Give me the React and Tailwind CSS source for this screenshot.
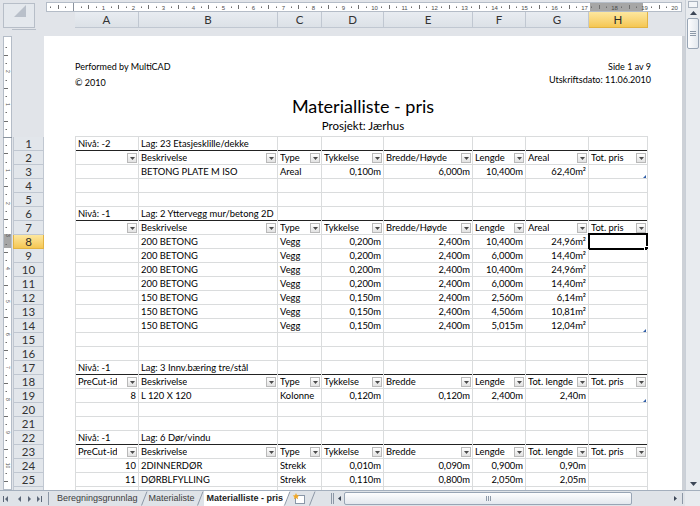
import React from 'react';

const W = [63, 139, 44, 62, 89, 53, 63, 59];
const LETTERS = ['A', 'B', 'C', 'D', 'E', 'F', 'G', 'H'];
const GRID = 'grid grid-cols-[63px_139px_44px_62px_89px_53px_63px_59px]';

const H1 = ['', 'Beskrivelse', 'Type', 'Tykkelse', 'Bredde/Høyde', 'Lengde', 'Areal', 'Tot. pris'];
const H2 = ['PreCut-id', 'Beskrivelse', 'Type', 'Tykkelse', 'Bredde', 'Lengde', 'Tot. lengde', 'Tot. pris'];

const blank = { t: 'blank' };
const vegg = (b, d, f, g) => ({ t: 'data', c: ['', b, 'Vegg', d, '2,400m', f, g, ''] });

const ROWS = [
  { t: 'lvl', c: ['Nivå: -2', 'Lag: 23 Etasjesklille/dekke'] },
  { t: 'head', c: H1 },
  { t: 'data', c: ['', 'BETONG PLATE M ISO', 'Areal', '0,100m', '6,000m', '10,400m', '62,40m²', ''], mark: true },
  blank,
  blank,
  { t: 'lvl', c: ['Nivå: -1', 'Lag: 2 Yttervegg mur/betong 2D'] },
  { t: 'head', c: H1 },
  { ...vegg('200 BETONG', '0,200m', '10,400m', '24,96m²'), sel: true },
  vegg('200 BETONG', '0,200m', '6,000m', '14,40m²'),
  vegg('200 BETONG', '0,200m', '10,400m', '24,96m²'),
  vegg('200 BETONG', '0,200m', '6,000m', '14,40m²'),
  vegg('150 BETONG', '0,150m', '2,560m', '6,14m²'),
  vegg('150 BETONG', '0,150m', '4,506m', '10,81m²'),
  { ...vegg('150 BETONG', '0,150m', '5,015m', '12,04m²'), mark: true },
  blank,
  blank,
  { t: 'lvl', c: ['Nivå: -1', 'Lag: 3 Innv.bæring tre/stål'] },
  { t: 'head', c: H2 },
  { t: 'data', c: ['8', 'L 120 X 120', 'Kolonne', '0,120m', '0,120m', '2,400m', '2,40m', ''], mark: true },
  blank,
  blank,
  { t: 'lvl', c: ['Nivå: -1', 'Lag: 6 Dør/vindu'] },
  { t: 'head', c: H2 },
  { t: 'data', c: ['10', '2DINNERDØR', 'Strekk', '0,010m', '0,090m', '0,900m', '0,90m', ''] },
  { t: 'data', c: ['11', 'DØRBLFYLLING', 'Strekk', '0,110m', '0,800m', '2,050m', '2,05m', ''] },
  { t: 'data', c: ['15', '2DSDØRUTV', 'Strekk', '0,054m', '0,105m', '0,920m', '0,92m', ''] },
];

function Drop() {
  return (
    <span className="shrink-0 w-[10px] h-[10px] border border-[#b9b9b9] bg-gradient-to-b from-white to-[#e2e2e2] flex items-center justify-center">
      <svg width="5" height="3" viewBox="0 0 5 3"><path d="M0 0H5L2.5 3Z" fill="#4a4a4a" /></svg>
    </span>
  );
}

function Cell({ r, i }) {
  const br = 'border-r border-[#dadcdd] relative min-w-0 overflow-visible whitespace-nowrap';
  if (r.t === 'head') {
    return (
      <div className={`${br} flex items-center justify-between pl-[2px] pr-[1px]`}>
        <span className="overflow-hidden">{r.c[i]}</span>
        <Drop />
      </div>
    );
  }
  if (r.t === 'lvl') {
    return <div className={`${br} flex items-center pl-[2px]`}>{r.c[i] || ''}</div>;
  }
  if (r.t === 'data') {
    const right = i === 0 || (i >= 3 && i <= 6);
    return (
      <div className={`${br} flex items-center ${right ? 'justify-end pr-[2px]' : 'pl-[2px]'}`}>
        {r.c[i]}
        {i === 7 && r.sel && (
          <span className="absolute -left-[1px] -top-[2px] -right-[1px] -bottom-[1px] border-2 border-black">
            <span className="absolute -right-[3px] -bottom-[3px] w-[5px] h-[5px] bg-black border border-white" />
          </span>
        )}
        {i === 7 && r.mark && (
          <svg className="absolute right-[1px] bottom-[1px]" width="3" height="3" viewBox="0 0 3 3">
            <path d="M3 0V3H0Z" fill="#2f5ea8" />
          </svg>
        )}
      </div>
    );
  }
  return <div className={br} />;
}

function Row({ r }) {
  const top = r.t === 'head' ? 'shadow-[0_-1px_0_#222]' : '';
  return (
    <div className={`${GRID} h-[14px] border-b border-[#dadcdd] ${top}`}>
      {W.map((_, i) => (
        <Cell key={i} r={r} i={i} />
      ))}
    </div>
  );
}

function HRuler() {
  const els = [];
  for (let q = -3; q <= 83; q++) {
    const x = Math.round(27 + q * 7.5125) + 0.5;
    if (x < 2 || x > 634) continue;
    if (q % 4 === 0) {
      const c = q / 4;
      if (c > 0) {
        els.push(
          <text key={q} x={x} y={8} fontSize="6" textAnchor="middle" fill="#4b4b4b" fontFamily="Liberation Sans, sans-serif">
            {c}
          </text>
        );
      } else {
        els.push(<line key={q} x1={x} x2={x} y1={1} y2={9} stroke="#8a939e" />);
      }
    } else if (q % 2 === 0) {
      els.push(<line key={q} x1={x} x2={x} y1={3} y2={7} stroke="#6f6f6f" />);
    } else {
      els.push(<line key={q} x1={x} x2={x} y1={4.5} y2={6} stroke="#6f6f6f" />);
    }
  }
  return (
    <svg width="636" height="10" className="block">
      <rect x="0.5" y="0.5" width="635" height="9" fill="#fff" stroke="#b4bcc7" />
      <rect x="544" y="1" width="53" height="8" fill="#a6a6a6" />
      {els}
    </svg>
  );
}

function VRuler() {
  const els = [];
  for (let q = -13; q <= 46; q++) {
    const y = Math.round(101 + q * 8.2) + 0.5;
    if (y < 6 || y > 448) continue;
    if (q % 4 === 0) {
      const c = Math.abs(q / 4);
      if (c > 0) {
        els.push(
          <text key={q} x={0} y={0} fontSize="5" textAnchor="middle" fill="#4b4b4b" fontFamily="Liberation Sans, sans-serif" transform={`translate(2.5 ${y}) rotate(90)`}>
            {c}
          </text>
        );
      } else {
        els.push(<line key={q} x1={0} x2={9} y1={y} y2={y} stroke="#8a939e" />);
      }
    } else if (q % 2 === 0) {
      els.push(<line key={q} x1={1} x2={5} y1={y} y2={y} stroke="#6f6f6f" />);
    } else {
      els.push(<line key={q} x1={2.5} x2={4} y1={y} y2={y} stroke="#6f6f6f" />);
    }
  }
  return (
    <svg width="9" height="454" className="block">
      <rect x="0.5" y="0.5" width="8" height="453" fill="#fff" stroke="#b4bcc7" />
      <rect x="1" y="198" width="7" height="14" fill="#a6a6a6" />
      {els}
    </svg>
  );
}

function VScroll() {
  return (
    <div className="w-[15px] flex flex-col bg-[#e8ebef] border-l border-[#c9cfd7]">
      <div className="h-[7px] mx-[2px] mt-[1px] border border-[#aab3bf] bg-[#f3f5f8]" />
      <div className="h-[10px] flex items-center justify-center">
        <svg width="7" height="4" viewBox="0 0 7 4"><path d="M0 4L3.5 0L7 4Z" fill="#3c4656" /></svg>
      </div>
      <div className="h-[31px] mx-[1px] rounded-[2px] border border-[#98a5b5] bg-gradient-to-r from-[#fdfdfe] to-[#e3e8ee] flex flex-col items-center justify-center gap-[1px]">
        <span className="w-[6px] h-px bg-[#8d99a8]" />
        <span className="w-[6px] h-px bg-[#8d99a8]" />
        <span className="w-[6px] h-px bg-[#8d99a8]" />
      </div>
      <div className="flex-1" />
      <div className="h-[12px] flex items-center justify-center">
        <svg width="7" height="4" viewBox="0 0 7 4"><path d="M0 0L3.5 4L7 0Z" fill="#3c4656" /></svg>
      </div>
    </div>
  );
}

function Slash({ fill = 'none' }) {
  return (
    <svg width="8" height="15" viewBox="0 0 8 15" className="block shrink-0">
      {fill !== 'none' && <path d="M0 0H7.5L2 14.5H0Z" fill={fill} />}
      <path d="M1.5 14.5L7 0.5" stroke="#8c97a6" fill="none" />
    </svg>
  );
}

function TabBar() {
  return (
    <div className="h-[16px] flex bg-[#dfe3e8] border-t border-[#a4afbd] text-[9px] leading-[15px] text-[#3c3c3c] font-['Liberation_Sans',Arial,sans-serif]">
      <svg width="46" height="15" viewBox="0 0 46 15" className="block shrink-0">
        <path d="M3 5h1v6H3zM8 5v6L5 8z" fill="#5b6677" />
        <path d="M21 5v6l-3-3z" fill="#5b6677" />
        <path d="M28 5v6l3-3z" fill="#5b6677" />
        <path d="M37 5v6l3-3zM41 5h1v6h-1z" fill="#5b6677" />
      </svg>
      <div className="w-[284px] flex items-stretch overflow-hidden">
        <span className="shrink-0 w-px bg-[#8c97a6] my-[1px] ml-[2px]" />
        <div className="shrink-0 pl-[8px] pr-[2px]">Beregningsgrunnlag</div>
        <Slash />
        <div className="shrink-0 pl-[1px] pr-[1px]">Materialiste</div>
        <Slash />
        <div className="shrink-0 bg-white font-bold text-[#222] pl-[3px]">Materialliste - pris</div>
        <Slash fill="#ffffff" />
        <div className="shrink-0 flex items-center pl-[1px] pr-[2px]">
          <svg width="14" height="11" viewBox="0 0 14 11">
            <rect x="3.5" y="2.5" width="9" height="8" fill="#fff" stroke="#8a97a8" />
            <path d="M4 0l1 2.2 2.3.3-1.7 1.5.5 2.3L4 5.1 1.9 6.3l.5-2.3L.7 2.5 3 2.2z" fill="#f1a828" />
          </svg>
        </div>
        <Slash />
      </div>
      <div className="w-[355px] flex items-center">
        <span className="w-[3px] h-[11px] border-x border-[#8c97a6] ml-[1px]" />
        <svg width="10" height="15" viewBox="0 0 10 15" className="block shrink-0">
          <path d="M7 5v5L4 7.5z" fill="#3c4656" />
        </svg>
        <div className="w-[288px] h-[13px] rounded-[2px] border border-[#98a5b5] bg-gradient-to-b from-[#fdfdfe] to-[#e3e8ee] flex items-center justify-center gap-[1px]">
          <span className="w-px h-[5px] bg-[#8d99a8]" />
          <span className="w-px h-[5px] bg-[#8d99a8]" />
          <span className="w-px h-[5px] bg-[#8d99a8]" />
        </div>
        <div className="flex-1" />
        <svg width="12" height="15" viewBox="0 0 12 15" className="block shrink-0">
          <path d="M4 5v5l3-2.5z" fill="#3c4656" />
        </svg>
        <span className="w-[2px] h-[11px] border-l border-[#8c97a6] mr-[1px]" />
      </div>
      <div className="w-[15px] bg-[#e8ebef]" />
    </div>
  );
}

export default function App() {
  return (
    <div className="w-[700px] h-[506px] overflow-hidden bg-[#e1e4e9] flex flex-col font-['Lato',sans-serif] text-black select-none">
      <div className="flex h-[490px]">
        <div className="w-[685px] flex flex-col">
          {/* ruler + column headers */}
          <div className="flex h-[36px] shrink-0">
            <div className="w-[44px] flex flex-col">
              <div className="ml-[3px] mt-[3px] w-[32px] h-[25px] border border-[#b7bec8] bg-[#e4e8ed] flex justify-end items-start pt-[1px] pr-[8px]">
                <svg width="12" height="12" viewBox="0 0 12 12"><path d="M12 0V12H0Z" fill="#b9c0ca" /></svg>
              </div>
              <div className="ml-[12px] mt-[1px] w-[24px] h-px bg-[#b7bec8]" />
            </div>
            <div className="flex-1 flex flex-col">
              <div className="h-[12px] pt-[2px] pl-[2px]">
                <HRuler />
              </div>
              <div className="h-[16px] flex pl-[31px]">
                {LETTERS.map((l, i) => (
                  <div
                    key={l}
                    style={{ width: (i === 0 ? 1 : 0) + W[i] }}
                    className={`flex items-center justify-center text-[11.5px] border-r border-b ${
                      l === 'H'
                        ? 'bg-gradient-to-b from-[#fde79e] to-[#f5c752] border-[#e2b343] text-[#2b2b2b]'
                        : 'bg-gradient-to-b from-[#e8ecf1] to-[#dce1e7] border-[#c0c7d1] text-[#333]'
                    }`}
                  >
                    {l}
                  </div>
                ))}
              </div>
            </div>
          </div>

          {/* page body */}
          <div className="flex flex-1 min-h-0 overflow-hidden">
            <div className="w-[13px] pl-[3px] shrink-0">
              <VRuler />
            </div>
            <div className="w-[31px] shrink-0 pt-[101px] flex flex-col">
              {ROWS.map((r, i) => (
                <div
                  key={i}
                  className={`h-[14px] shrink-0 flex items-center justify-center text-[11.5px] border-b border-x ${
                    i === 7
                      ? 'bg-gradient-to-b from-[#fde79e] to-[#f5c752] border-[#e2b343] text-[#2b2b2b]'
                      : 'bg-[#e2e6eb] border-[#c0c7d1] text-[#333]'
                  }`}
                >
                  {i + 1}
                </div>
              ))}
            </div>
            <div className="w-[638px] shrink-0 bg-white pl-[31px] text-[9.4px]">
              <div className="h-[100px] w-[576px] flex flex-col">
                <div className="h-[59px] flex justify-between items-start text-[9px]">
                  <div className="pt-[23px] leading-[16px]">
                    <div>Performed by MultiCAD</div>
                    <div>© 2010</div>
                  </div>
                  <div className="pt-[24px] leading-[13px] text-right">
                    <div>Side 1 av 9</div>
                    <div>Utskriftsdato: 11.06.2010</div>
                  </div>
                </div>
                <div className="text-center text-[18px] leading-[22px]">Materialliste - pris</div>
                <div className="text-center text-[11.5px] leading-[14px] mt-[2px]">Prosjekt: Jærhus</div>
              </div>
              <div className="w-[573px] border-l border-t border-[#dadcdd]">
                {ROWS.map((r, i) => (
                  <Row key={i} r={r} />
                ))}
              </div>
            </div>
            <div className="w-[3px] bg-[#cdd1d7]" />
          </div>
        </div>
        <VScroll />
      </div>
      <TabBar />
    </div>
  );
}
